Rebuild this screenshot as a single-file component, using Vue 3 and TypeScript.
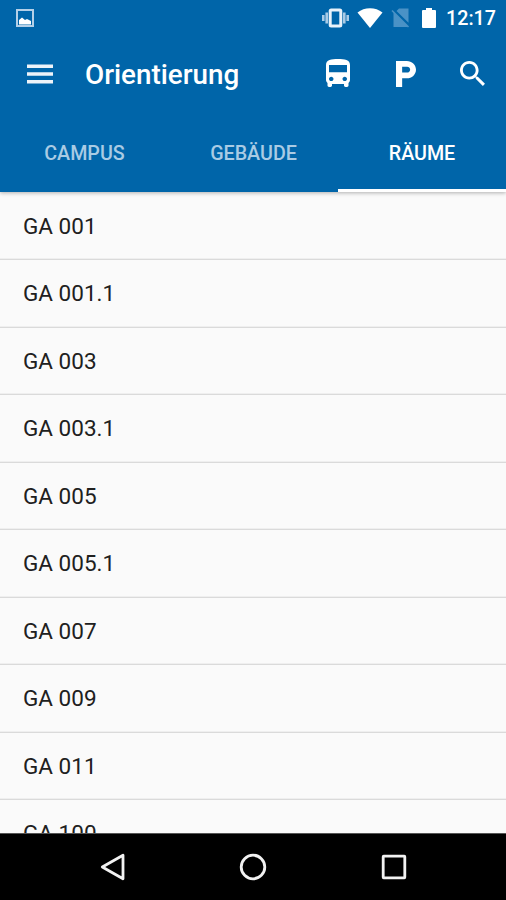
<script setup lang="ts">
import { ref } from 'vue'

const tabs: string[] = ['CAMPUS', 'GEBÄUDE', 'RÄUME']
const activeTab = ref<string>('RÄUME')

const rooms: string[] = [
  'GA 001',
  'GA 001.1',
  'GA 003',
  'GA 003.1',
  'GA 005',
  'GA 005.1',
  'GA 007',
  'GA 009',
  'GA 011',
  'GA 100',
]
</script>

<template>
  <div class="screen">
    <header class="app-bar">
      <div class="status-bar">
        <svg class="status-photo" viewBox="0 0 18 18">
          <path d="M1 1h16v16H1z" fill="none" stroke="#b4d0e8" stroke-width="2" />
          <path d="M3 15.500v-4.500l3-2.500 3 2.500 2-1 4 2v3.500z" fill="#fff" />
        </svg>
        <div class="status-right">
          <svg class="status-vibrate" viewBox="0 0 27 20">
            <path d="M1.300 7v6M4.700 4.500v11M22.300 4.500v11M25.700 7v6" stroke="#a9cbe6" stroke-width="2.600" />
            <rect x="8.200" y="2" width="10.600" height="16" rx="1" fill="none" stroke="#e8f2fa" stroke-width="3" />
          </svg>
          <svg class="status-wifi" viewBox="0 0 26 20">
            <path d="M13 20 .500 4.600C4 1.700 8.300.300 13 .300s9 1.400 12.500 4.300z" fill="#fff" />
          </svg>
          <svg class="status-sim" viewBox="0 0 20 20">
            <path d="M8 .500h9.500v14.200L5.500 3zM2.500 4 17 18.500 16 19H2.500z" fill="#4a92c6" />
            <path d="M1 2.500 17.500 19" stroke="#4a92c6" stroke-width="1.600" />
          </svg>
          <svg class="status-battery" viewBox="0 0 14 20">
            <path d="M4 0h6v2h3q1 0 1 1v16q0 1-1 1H1q-1 0-1-1V3q0-1 1-1h3z" fill="#fff" />
          </svg>
          <span class="clock">12:17</span>
        </div>
      </div>

      <div class="toolbar">
        <svg class="menu" viewBox="0 0 26 20">
          <path d="M0 .500h26v3.500H0zM0 8.200h26v3.500H0zM0 15.900h26v3.500H0z" fill="#edf3f9" />
        </svg>
        <h1 class="title">Orientierung</h1>
        <svg class="action bus" viewBox="4 2 16 19" preserveAspectRatio="none">
          <path d="M4 16c0 .88.39 1.670 1 2.220V20c0 .55.45 1 1 1h1c.55 0 1-.45 1-1v-1h8v1c0 .55.45 1 1 1h1c.55 0 1-.45 1-1v-1.780c.61-.55 1-1.340 1-2.220V6c0-3.500-3.580-4-8-4s-8 .5-8 4v10zm3.500 1c-.83 0-1.500-.67-1.500-1.500S6.670 14 7.500 14s1.500.67 1.500 1.500S8.330 17 7.500 17zm9 0c-.83 0-1.500-.67-1.500-1.500s.67-1.500 1.500-1.500 1.500.67 1.500 1.500-.67 1.500-1.500 1.500zm1.500-6H6V6h12v5z" />
        </svg>
        <svg class="action parking" viewBox="6 3 13 18" preserveAspectRatio="none">
          <path d="M13 3H6v18h4v-6h3c3.310 0 6-2.690 6-6s-2.690-6-6-6zm.2 8H10V7h3.200c1.100 0 2 .9 2 2s-.9 2-2 2z" />
        </svg>
        <svg class="action search" viewBox="3 3 17.500 17.500">
          <path d="M15.500 14h-.79l-.28-.27C15.410 12.590 16 11.110 16 9.500 16 5.910 13.090 3 9.500 3S3 5.910 3 9.500 5.910 16 9.500 16c1.610 0 3.090-.59 4.230-1.570l.27.28v.79l5 4.990L20.490 19l-4.990-5zm-6 0C7.010 14 5 11.990 5 9.500S7.010 5 9.500 5 14 7.010 14 9.500 11.990 14 9.500 14z" />
        </svg>
      </div>

      <nav class="tabs">
        <button
          v-for="tab in tabs"
          :key="tab"
          class="tab"
          :class="{ active: tab === activeTab }"
          @click="activeTab = tab"
        >
          {{ tab }}
        </button>
      </nav>
    </header>

    <ul class="rooms">
      <li v-for="room in rooms" :key="room" class="room">{{ room }}</li>
    </ul>

    <footer class="nav-bar">
      <svg viewBox="0 0 30 30">
        <path d="M4.300 15 25 3.200v23.600z" />
      </svg>
      <svg viewBox="0 0 30 30">
        <circle cx="15" cy="15" r="11.800" />
      </svg>
      <svg viewBox="0 0 30 30">
        <rect x="4.200" y="4.200" width="21.600" height="21.600" rx="0.500" />
      </svg>
    </footer>
  </div>
</template>

<style>
body {
  margin: 0;
}
</style>

<style scoped>
.screen {
  display: flex;
  flex-direction: column;
  width: 506px;
  height: 900px;
  overflow: hidden;
  background: #fafafa;
  font-family: Roboto, 'Liberation Sans', sans-serif;
}
.screen svg {
  display: block;
  flex: none;
}
.app-bar {
  position: relative;
  flex: none;
  height: 191.500px;
  background: #0065a9;
  box-shadow: 0 1px 4px rgba(0, 0, 0, 0.3);
}
.status-bar {
  display: flex;
  align-items: center;
  justify-content: space-between;
  box-sizing: border-box;
  height: 34px;
  padding: 1px 11px 0 16px;
}
.status-photo {
  width: 18px;
  height: 18px;
}
.status-right {
  display: flex;
  align-items: center;
}
.status-vibrate {
  width: 27px;
  height: 20px;
}
.status-wifi {
  width: 26px;
  height: 20px;
  margin-left: 8px;
}
.status-sim {
  width: 20px;
  height: 20px;
  margin-left: 8px;
}
.status-battery {
  width: 14px;
  height: 20px;
  margin-left: 11px;
}
.clock {
  width: 49px;
  margin-left: 10px;
  padding-top: 2px;
  color: #fff;
  font-size: 19.700px;
  font-weight: 500;
  line-height: 32px;
  white-space: nowrap;
}
.toolbar {
  display: flex;
  align-items: center;
  box-sizing: border-box;
  height: 78px;
  padding: 0 21px 0 27px;
}
.menu {
  width: 26px;
  height: 20px;
  margin-top: 1px;
}
.title {
  flex: 1;
  margin: 4px 0 0 32px;
  color: #fff;
  font-size: 27.800px;
  font-weight: 500;
  line-height: 36px;
}
.action {
  fill: #fff;
}
.bus {
  width: 24px;
  height: 28px;
}
.parking {
  width: 20px;
  height: 26px;
  margin: 1px 0 0 46px;
}
.search {
  width: 25px;
  height: 25px;
  margin-left: 44px;
}
.tabs {
  display: grid;
  grid-template-columns: 169px 169px 168px;
  height: 79.500px;
}
.tab {
  box-sizing: border-box;
  padding: 7px 0 0;
  border: 0;
  border-bottom: 3px solid transparent;
  background: none;
  color: #a9cbe4;
  font: 500 19.700px Roboto, 'Liberation Sans', sans-serif;
}
.tab.active {
  border-bottom-color: #fff;
  color: #fff;
}
.rooms {
  flex: 1;
  min-height: 0;
  margin: 0;
  padding: 1.300px 0 0;
  overflow: hidden;
  list-style: none;
}
.room {
  box-sizing: border-box;
  height: 67.500px;
  padding: 0 0 0 23px;
  background: linear-gradient(#efefef, #efefef) bottom / 100% 1px no-repeat;
  border-bottom: 1px solid #dadada;
  color: #202020;
  font-size: 22.500px;
  line-height: 66px;
}
.nav-bar {
  display: flex;
  align-items: center;
  justify-content: center;
  gap: 110.500px;
  box-sizing: border-box;
  flex: none;
  height: 67px;
  border-top: 1px solid #555;
  background: #000;
}
.nav-bar svg {
  width: 30px;
  height: 30px;
  fill: none;
  stroke: #f2f2f2;
  stroke-width: 2.800;
  stroke-linejoin: round;
}
</style>
